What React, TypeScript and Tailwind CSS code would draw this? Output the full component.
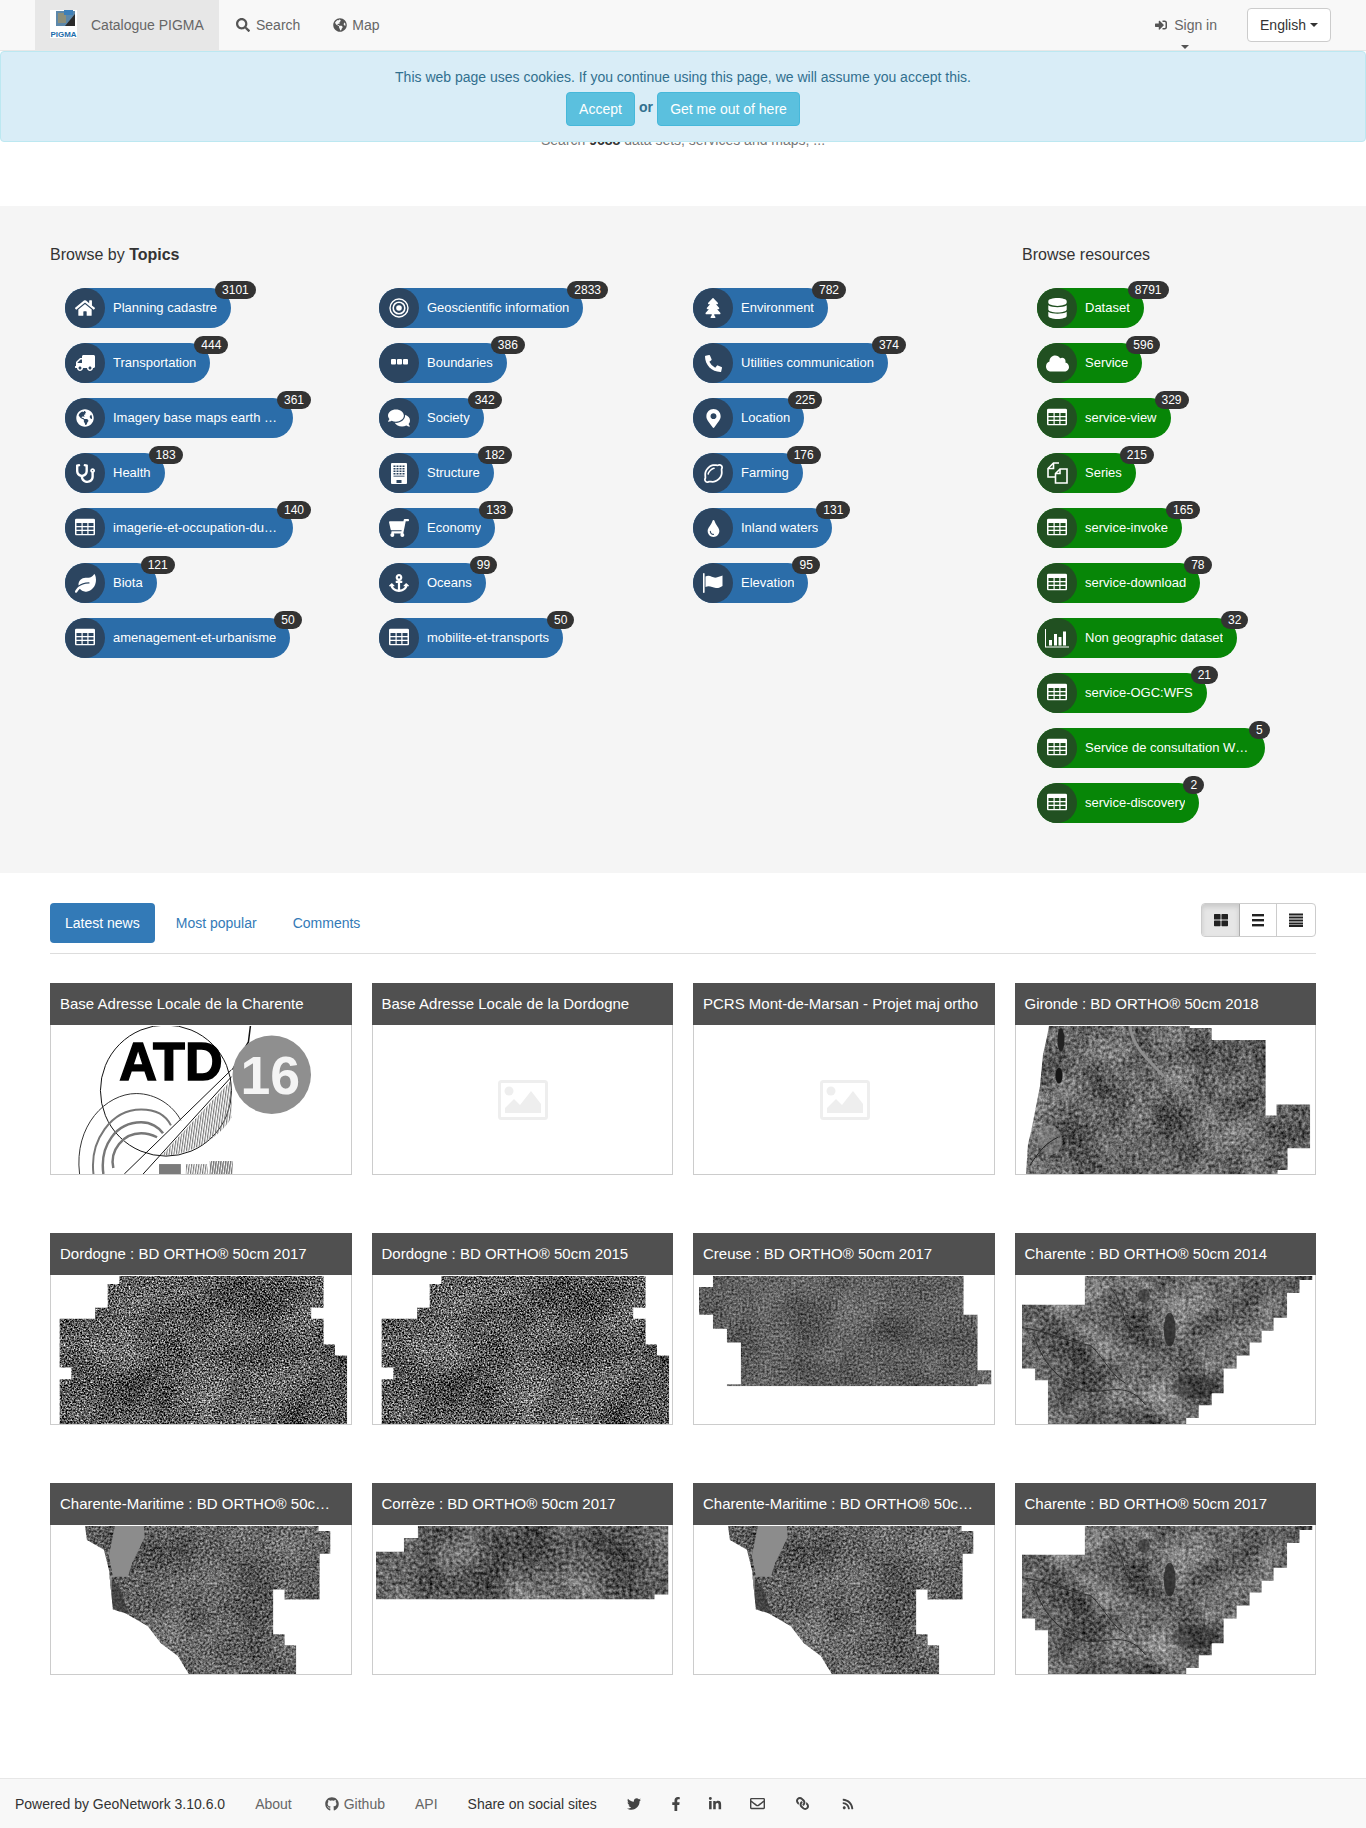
import React from "react";
import {
  FaHome, FaTruck, FaGlobeAmericas, FaStethoscope, FaLeaf, FaComments, FaShoppingCart, FaAnchor,
  FaTree, FaPhoneAlt, FaMapMarkerAlt, FaRegLemon, FaTint, FaDatabase, FaCloud, FaSearch, FaSignInAlt,
  FaTwitter, FaFacebookF, FaLinkedinIn, FaRegEnvelope, FaLink, FaRss, FaGithub, FaThLarge,
} from "react-icons/fa";

const TableIcon = () => (
  <svg width="20" height="17" viewBox="0 0 20 17" className="-translate-y-[1.5px] fill-white">
    <path fillRule="evenodd" d="M1.5 0h17A1.5 1.5 0 0 1 20 1.5v14a1.5 1.5 0 0 1-1.5 1.5h-17A1.5 1.5 0 0 1 0 15.5v-14A1.5 1.5 0 0 1 1.5 0ZM1.5 4.5v3h5v-3Zm6.2 0v3h4.6v-3Zm5.8 0v3h5v-3ZM1.5 8.7v2.6h5V8.7Zm6.2 0v2.6h4.6V8.7Zm5.8 0v2.6h5V8.7ZM1.5 12.5v3h5v-3Zm6.2 0v3h4.6v-3Zm5.8 0v3h5v-3Z" />
  </svg>
);
const RingsIcon = () => (
  <svg width="20" height="20" viewBox="0 0 20 20" fill="none" stroke="#fff">
    <circle cx="10" cy="10" r="9" strokeWidth="1.4" />
    <circle cx="10" cy="10" r="5.8" strokeWidth="1.6" />
    <circle cx="10" cy="10" r="2.8" fill="#fff" stroke="none" />
  </svg>
);
const DotsIcon = () => (
  <svg width="17" height="6" viewBox="0 0 17 6" className="-translate-y-[1px] fill-white">
    <rect x="0" y="0" width="5" height="5.5" rx="1" />
    <rect x="6" y="0" width="5" height="5.5" rx="1" />
    <rect x="12" y="0" width="5" height="5.5" rx="1" />
  </svg>
);
const BuildingIcon = () => (
  <svg width="16" height="21" viewBox="0 0 16 21">
    <rect width="16" height="21" rx="1" fill="#fff" />
    {[2.5, 5, 7.5, 10].map((y) =>
      [2.5, 5.5, 8.5, 11.5].map((x) => <rect key={`${x}-${y}`} x={x} y={y} width="2" height="1.5" fill="#2c4560" />),
    )}
    <rect x="2.5" y="12.5" width="11" height="1.5" fill="#2c4560" opacity=".6" />
    <rect x="5.5" y="17" width="5" height="3" fill="#2c4560" />
  </svg>
);
const FlagIcon = () => (
  <svg width="20" height="20" viewBox="0 0 20 20" className="fill-white">
    <rect x="0" y="0" width="1.6" height="20" rx=".8" />
    <path d="M2.5 3.5C7 1 9.5 5.5 13.5 4.5c2-.5 4.5-1.5 6-2v10.5c-2 1.3-4 2.2-6.5 2-4-.4-6.5-3-10.5-1Z" />
  </svg>
);
const BarsIcon = () => (
  <svg width="24" height="19" viewBox="0 0 24 19" className="fill-white">
    <rect x="0" y="0" width="1" height="18" />
    <rect x="0" y="17.5" width="24" height="1" />
    <rect x="4" y="11" width="3" height="5.5" />
    <rect x="9" y="5" width="3" height="11.5" />
    <rect x="13.5" y="8" width="3" height="8.5" />
    <rect x="18" y="2.5" width="3" height="14" />
  </svg>
);
const FilesIcon = () => (
  <svg width="21" height="22" viewBox="0 0 21 22" fill="none" stroke="#fff" strokeWidth="1.6">
    <path d="M12 1H6.5L1 6.5V15h7" />
    <path d="M6.5 1v5.5H1" />
    <path d="M20 7h-7l-4.5 4.5V21H20Z" />
    <path d="M13 7v4.5H8.5" />
  </svg>
);

type Item = { label: string; count: number; icon: React.ReactNode };
const topics: Item[] = [
  { label: "Planning cadastre", count: 3101, icon: <FaHome size={20} color="#fff" /> },
  { label: "Geoscientific information", count: 2833, icon: <RingsIcon /> },
  { label: "Environment", count: 782, icon: <FaTree size={20} color="#fff" /> },
  { label: "Transportation", count: 444, icon: <FaTruck size={20} color="#fff" className="-scale-x-100" /> },
  { label: "Boundaries", count: 386, icon: <DotsIcon /> },
  { label: "Utilities communication", count: 374, icon: <FaPhoneAlt size={17} color="#fff" /> },
  { label: "Imagery base maps earth cover", count: 361, icon: <FaGlobeAmericas size={18} color="#fff" /> },
  { label: "Society", count: 342, icon: <FaComments size={22} color="#fff" /> },
  { label: "Location", count: 225, icon: <FaMapMarkerAlt size={19} color="#fff" /> },
  { label: "Health", count: 183, icon: <FaStethoscope size={19} color="#fff" /> },
  { label: "Structure", count: 182, icon: <BuildingIcon /> },
  { label: "Farming", count: 176, icon: <FaRegLemon size={19} color="#fff" /> },
  { label: "imagerie-et-occupation-du-sol", count: 140, icon: <TableIcon /> },
  { label: "Economy", count: 133, icon: <FaShoppingCart size={20} color="#fff" className="-scale-x-100" /> },
  { label: "Inland waters", count: 131, icon: <FaTint size={17} color="#fff" /> },
  { label: "Biota", count: 121, icon: <FaLeaf size={21} color="#fff" /> },
  { label: "Oceans", count: 99, icon: <FaAnchor size={20} color="#fff" /> },
  { label: "Elevation", count: 95, icon: <FlagIcon /> },
  { label: "amenagement-et-urbanisme", count: 50, icon: <TableIcon /> },
  { label: "mobilite-et-transports", count: 50, icon: <TableIcon /> },
];
const resources: Item[] = [
  { label: "Dataset", count: 8791, icon: <FaDatabase size={21} color="#fff" /> },
  { label: "Service", count: 596, icon: <FaCloud size={23} color="#fff" /> },
  { label: "service-view", count: 329, icon: <TableIcon /> },
  { label: "Series", count: 215, icon: <FilesIcon /> },
  { label: "service-invoke", count: 165, icon: <TableIcon /> },
  { label: "service-download", count: 78, icon: <TableIcon /> },
  { label: "Non geographic dataset", count: 32, icon: <BarsIcon /> },
  { label: "service-OGC:WFS", count: 21, icon: <TableIcon /> },
  { label: "Service de consultation WMS", count: 5, icon: <TableIcon /> },
  { label: "service-discovery", count: 2, icon: <TableIcon /> },
];

function Pill({ item, green }: { item: Item; green?: boolean }) {
  return (
    <div className={`relative inline-flex h-10 w-fit max-w-[228px] items-center rounded-[20px] pl-[48px] pr-[14px] text-[13px] text-white ${green ? "bg-[#078607]" : "bg-[#2b6da9]"}`}>
      <span className={`absolute left-0 top-0 flex h-10 w-10 items-center justify-center rounded-full ${green ? "bg-[#215021]" : "bg-[#2c4560]"}`}>{item.icon}</span>
      <span className="truncate">{item.label}</span>
      <span className="absolute left-[calc(100%-16px)] top-[-7px] h-[18px] rounded-[10px] bg-[#333] px-[7px] text-[12px] leading-[18px] text-white">{item.count}</span>
    </div>
  );
}

function Noise({ id, freq, k, mean, seed, low = 0.3 }: { id: string; freq: number; k: number; mean: number; seed: number; low?: number }) {
  const b = mean - k / 2;
  const m = `${k} 0 0 0 ${b} ${k} 0 0 0 ${b} ${k} 0 0 0 ${b} 0 0 0 0 1`;
  return (
    <filter id={id} x="0" y="0" width="100%" height="100%" colorInterpolationFilters="sRGB">
      <feTurbulence type="fractalNoise" baseFrequency={freq} numOctaves={3} seed={seed} result="n" />
      <feColorMatrix in="n" type="matrix" values={m} result="g" />
      <feTurbulence type="fractalNoise" baseFrequency={0.022} numOctaves={2} seed={seed + 3} result="l" />
      <feColorMatrix in="l" type="matrix" values="1 0 0 0 0 1 0 0 0 0 1 0 0 0 0 0 0 0 0 1" result="lg" />
      <feComposite in="g" in2="lg" operator="arithmetic" k1="0" k2="1" k3={low} k4={-low / 2} />
    </filter>
  );
}

function MapThumb({ id, points, freq, k, mean, seed, low, children }: { id: string; points: string; freq: number; k: number; mean: number; seed: number; low?: number; children?: React.ReactNode }) {
  return (
    <svg viewBox="0 0 300 149" className="block h-full w-full" preserveAspectRatio="none">
      <defs>
        <Noise id={`f-${id}`} freq={freq} k={k} mean={mean} seed={seed} low={low} />
        <clipPath id={`c-${id}`}>
          <polygon points={points} />
        </clipPath>
      </defs>
      <g clipPath={`url(#c-${id})`}>
        <rect width="300" height="149" filter={`url(#f-${id})`} />
        {children}
      </g>
    </svg>
  );
}

const Placeholder = () => (
  <div className="flex h-full items-center justify-center pl-[2px]">
    <svg width="50" height="40" viewBox="0 0 50 40">
      <rect x="1.5" y="1.5" width="47" height="37" rx="2" fill="none" stroke="#eeeeee" strokeWidth="3" />
      <circle cx="11" cy="11" r="4.5" fill="#eeeeee" />
      <path d="M7 33V28L16 19 22 25 33 11 43 24V33Z" fill="#eeeeee" />
    </svg>
  </div>
);

const AtdLogo = () => (
  <svg viewBox="0 0 300 149" className="block h-full w-full">
    <defs>
      <pattern id="hatch" width="2.4" height="4" patternUnits="userSpaceOnUse" patternTransform="rotate(8)">
        <rect width="1.1" height="4" fill="#777" />
      </pattern>
      <clipPath id="atd-clip"><rect width="300" height="149" /></clipPath>
    </defs>
    <g clipPath="url(#atd-clip)" fill="none">
      <circle cx="115" cy="65" r="66" stroke="#111" strokeWidth="1" />
      <path d="M181 54L181 92C170 112 140 130 110 131Z" fill="url(#hatch)" />
      <path d="M181 44L73 149M181 51L92 149" stroke="#111" strokeWidth="1" />
      <path d="M28 149C22 100 55 68 85 68C105 68 122 80 130 95" stroke="#333" strokeWidth="1" />
      <path d="M42 149C38 115 60 84 90 84C105 84 115 90 120 100" stroke="#777" strokeWidth="2" />
      <path d="M52 149C48 120 65 97 90 97C100 97 108 102 112 108" stroke="#777" strokeWidth="2.5" />
      <path d="M62 143C58 125 72 108 90 108C96 108 102 110 106 112" stroke="#777" strokeWidth="2.5" />
      <rect x="108" y="139" width="22" height="10" fill="#7b7b7b" />
      <rect x="135" y="139" width="22" height="10" fill="url(#hatch)" />
      <rect x="159" y="136" width="23" height="13" fill="url(#hatch)" />
      <rect x="159" y="136" width="23" height="13" fill="url(#hatch)" />
      <path d="M200 0L198 16L182 44" stroke="#111" strokeWidth="1.5" />
      <circle cx="221.5" cy="49" r="39.5" fill="#8f8f8f" />
      <text x="120" y="54" textAnchor="middle" fontFamily="Liberation Sans" fontWeight="700" fontSize="54" fill="#000" stroke="#000" strokeWidth="1.5" textLength="104" lengthAdjust="spacingAndGlyphs">ATD</text>
      <text x="220" y="68" textAnchor="middle" fontFamily="Liberation Sans" fontWeight="700" fontSize="54" fill="#f4f4f4">16</text>
    </g>
  </svg>
);

const dordogne = "68.5,0 273,0 273,32 260.6,32 260.6,43 273,43 273,69 284.5,69 284.5,80 296.6,80 296.6,149 8.7,149 8.7,104 20.4,104 20.4,92 8.7,92 8.7,43 44.2,43 44.2,32 56.8,32 56.8,8 68.5,8";
const creuse = "19,0 270,0 270,39 284,39 284,95 298,95 298,109 284,109 284,111 33,111 33,109 47,109 47,67 33,67 33,53 19,53 19,39 5,39 5,11 19,11";
const charente = "69,0 297,0 297,4 284,4 284,17 271.5,17 271.5,42 258,42 258,55 246,55 246,67 234,67 234,80 221,80 221,93 208,93 208,118 196,118 196,130 183,130 183,143 170.5,143 170.5,149 32,149 32,105 19,105 19,93 6,93 6,29 69,29";
const gironde = "33,0 174,0 174,2 196,2 196,14 250,14 250,90 261,90 261,79 294.6,79 294.6,123 272,123 272,145 262,145 262,149 10,149 12,119 15.6,104 20,81 24,61 27,29 31,11";
const maritime = "34,0 268,0 268,5 280,5 280,28 269,28 269,74 234,74 234,64 222.5,64 222.5,109 234,109 234,120 245.5,120 245.5,149 138,149 127,131 110,118 97,101 75,88 62,84 58,44 53,24 36,14";
const correze = "45,0 296,0 296,69 282,69 282,74 3,74 3,26 31,26 31,12 45,12";

const CharenteExtras = () => (
  <>
    <ellipse cx="154" cy="54" rx="6" ry="17" fill="#262626" opacity=".8" />
    <ellipse cx="178" cy="112" rx="22" ry="12" fill="#262626" opacity=".3" />
    <ellipse cx="128" cy="20" rx="6" ry="7" fill="#262626" opacity=".6" />
    <path d="M18 60C26 85 40 105 70 116C95 118 110 105 130 130" fill="none" stroke="#2e2e2e" strokeWidth="1" />
    <path d="M6 52C30 55 50 66 75 70C90 85 95 100 110 108" fill="none" stroke="#2e2e2e" strokeWidth="1" />
    <path d="M95 12C110 30 105 45 118 62" fill="none" stroke="#333" strokeWidth="1" />
  </>
);
const MaritimeExtras = () => (
  <>
    <path d="M64 0H93L94 11L81 38L77 51H62L58 30Z" fill="#8c8c8c" />
    <path d="M58 51L62 84L78 88L68 60Z" fill="#333" opacity=".65" />
    <path d="M60 51V82L64 85" fill="none" stroke="#aaa" strokeWidth="1.2" />
  </>
);
const GirondeExtras = () => (
  <>
    <path d="M114 0C118 25 135 35 148 51" fill="none" stroke="#8f8f8f" strokeWidth="3" />
    <path d="M148 51L172 65" fill="none" stroke="#8f8f8f" strokeWidth="1" />
    <ellipse cx="43" cy="50" rx="3.5" ry="8" fill="#161616" />
    <ellipse cx="45" cy="14" rx="3.5" ry="12" fill="#222" />
    <ellipse cx="34" cy="115" rx="12" ry="15" fill="#999" opacity=".45" />
    <path d="M14 140C24 125 30 118 42 112" fill="none" stroke="#222" strokeWidth="1" />
  </>
);

const cards: { title: string; body: React.ReactNode }[] = [
  { title: "Base Adresse Locale de la Charente", body: <AtdLogo /> },
  { title: "Base Adresse Locale de la Dordogne", body: <Placeholder /> },
  { title: "PCRS Mont-de-Marsan - Projet maj ortho", body: <Placeholder /> },
  { title: "Gironde : BD ORTHO® 50cm 2018", body: <MapThumb id="gir" points={gironde} freq={0.3} k={0.75} mean={0.39} seed={4} low={0.5}><GirondeExtras /></MapThumb> },
  { title: "Dordogne : BD ORTHO® 50cm 2017", body: <MapThumb id="dor1" points={dordogne} freq={0.6} k={1.7} mean={0.36} seed={7} low={0.35} /> },
  { title: "Dordogne : BD ORTHO® 50cm 2015", body: <MapThumb id="dor2" points={dordogne} freq={0.6} k={1.7} mean={0.36} seed={7} low={0.35} /> },
  { title: "Creuse : BD ORTHO® 50cm 2017", body: <MapThumb id="cre" points={creuse} freq={0.45} k={0.65} mean={0.37} seed={11} low={0.25} /> },
  { title: "Charente : BD ORTHO® 50cm 2014", body: <MapThumb id="cha1" points={charente} freq={0.3} k={0.7} mean={0.39} seed={15} low={0.55}><CharenteExtras /></MapThumb> },
  { title: "Charente-Maritime : BD ORTHO® 50cm 2017", body: <MapThumb id="mar1" points={maritime} freq={0.42} k={0.9} mean={0.38} seed={20} low={0.3}><MaritimeExtras /></MapThumb> },
  { title: "Corrèze : BD ORTHO® 50cm 2017", body: <MapThumb id="cor" points={correze} freq={0.3} k={0.75} mean={0.36} seed={23} low={0.4} /> },
  { title: "Charente-Maritime : BD ORTHO® 50cm 2014", body: <MapThumb id="mar2" points={maritime} freq={0.42} k={0.9} mean={0.38} seed={20} low={0.3}><MaritimeExtras /></MapThumb> },
  { title: "Charente : BD ORTHO® 50cm 2017", body: <MapThumb id="cha2" points={charente} freq={0.3} k={0.7} mean={0.39} seed={15} low={0.55}><CharenteExtras /></MapThumb> },
];

const Caret = ({ className = "" }: { className?: string }) => (
  <span className={`inline-block h-0 w-0 border-x-4 border-t-4 border-x-transparent border-t-current ${className}`} />
);

const Logo = () => (
  <svg width="27" height="28" viewBox="0 0 27 28">
    <rect width="27" height="28" fill="#fff" />
    <rect x="6" y="1" width="19" height="15" fill="#5d88aa" />
    <rect x="8" y="3" width="8" height="10" fill="#8d8f7a" />
    <path d="M15 16L25 4V16Z" fill="#2b2b2b" />
    <rect x="14" y="0" width="9" height="5" fill="#3d7fb8" />
    <text x="0.5" y="27" fontFamily="Liberation Sans" fontWeight="700" fontSize="7.6" fill="#1c6cab" textLength="26" lengthAdjust="spacingAndGlyphs">PIGMA</text>
  </svg>
);

const Bars = ({ n }: { n: number }) => (
  <svg width="14" height="14" viewBox="0 0 14 14" fill="#222">
    {n === 3
      ? [1, 6, 11].map((y) => <rect key={y} x="1" y={y} width="12" height="2.4" />)
      : [0.5, 3.5, 6.5, 9.5, 12].map((y) => <rect key={y} x="0" y={y} width="14" height="2" />)}
  </svg>
);

export default function App() {
  return (
    <div className="relative h-[1828px] overflow-hidden bg-white font-['Liberation_Sans',sans-serif] text-[14px] leading-5 text-[#333]">
      <header className="flex h-[51px] items-stretch border-b border-[#e7e7e7] bg-[#f8f8f8] pl-[35px] pr-[35px] text-[#666]">
        <div className="flex w-[184px] items-center bg-[#e7e7e7] pl-[15px]">
          <span className="mt-[-2px]"><Logo /></span>
          <span className="ml-[14px]">Catalogue PIGMA</span>
        </div>
        <div className="ml-[17px] flex items-center gap-[6px]"><FaSearch size={14} color="#555" />Search</div>
        <div className="ml-[33px] flex items-center gap-[5px]"><FaGlobeAmericas size={14} color="#555" />Map</div>
        <div className="relative ml-auto mr-[30px] flex items-center gap-[7px] text-[#666]">
          <FaSignInAlt size={12} color="#555" />
          Sign in
          <Caret className="absolute bottom-[1px] left-[26px] text-[#555]" />
        </div>
        <div className="my-[8px] flex h-[34px] w-[84px] items-center justify-center gap-1 rounded border border-[#ccc] bg-white text-[#333]">
          English <Caret />
        </div>
      </header>

      <div className="absolute left-0 right-0 top-[51px] z-10 rounded border border-[#bce8f1] bg-[#d9edf7] p-[15px] text-center text-[#31708f]">
        <div>This web page uses cookies. If you continue using this page, we will assume you accept this.</div>
        <div className="mt-[5px] flex items-center justify-center">
          <span className="flex h-[34px] w-[69px] items-center justify-center rounded border border-[#46b8da] bg-[#5bc0de] text-white">Accept</span>
          <b className="mx-1 mt-[-4px]">or</b>
          <span className="flex h-[34px] w-[143px] items-center justify-center rounded border border-[#46b8da] bg-[#5bc0de] text-white">Get me out of here</span>
        </div>
      </div>

      <div className="h-[155px] pt-[79px] text-center text-[#777]">
        Search <b className="text-[#333]">9688</b> data sets, services and maps, ...
      </div>

      <section className="flex bg-[#f5f5f5] pb-[50px] pl-[50px] pt-[38px]">
        <div className="w-[972px]">
          <h2 className="mb-[22px] h-[22px] text-[16px] leading-[22px]">Browse by <b>Topics</b></h2>
          <div className="grid grid-cols-[repeat(3,314px)] gap-y-[15px] pl-[15px]">
            {topics.map((t) => (
              <div key={t.label} className="h-10"><Pill item={t} /></div>
            ))}
          </div>
        </div>
        <div>
          <h2 className="mb-[22px] h-[22px] text-[16px] leading-[22px]">Browse resources</h2>
          <div className="flex flex-col gap-[15px] pl-[15px]">
            {resources.map((r) => (
              <div key={r.label} className="h-10"><Pill item={r} green /></div>
            ))}
          </div>
        </div>
      </section>

      <main className="px-[50px] pt-[30px]">
        <div className="flex items-start justify-between border-b border-[#ddd] pb-[10px]">
          <div className="flex items-center text-[#337ab7]">
            <span className="flex h-10 items-center rounded bg-[#337ab7] px-[15px] text-white">Latest news</span>
            <span className="ml-[6px] px-[15px]">Most popular</span>
            <span className="ml-[6px] px-[15px]">Comments</span>
          </div>
          <div className="flex h-[34px] w-[115px] overflow-hidden rounded border border-[#ccc]">
            <span className="flex w-[38px] items-center justify-center border-r border-[#adadad] bg-[#e6e6e6] shadow-[inset_0_3px_5px_rgba(0,0,0,0.125)]"><FaThLarge size={14} color="#222" /></span>
            <span className="flex w-[37px] items-center justify-center border-r border-[#ccc]"><Bars n={3} /></span>
            <span className="flex flex-1 items-center justify-center"><Bars n={5} /></span>
          </div>
        </div>

        <div className="mt-[29px] grid grid-cols-4 gap-x-[20px] gap-y-[58px]">
          {cards.map((c) => (
            <div key={c.title} className="h-[192px]">
              <div className="h-[42px] truncate bg-[#505050] pl-[10px] pr-[15px] text-[15px] leading-[42px] text-white">{c.title}</div>
              <div className="h-[150px] overflow-hidden border border-t-0 border-[#ccc] bg-white pt-[1px]">{c.body}</div>
            </div>
          ))}
        </div>
      </main>

      <footer className="absolute bottom-0 left-0 right-0 flex h-[50px] items-center border-t border-[#e7e7e7] bg-[#f8f8f8] pl-[15px] text-[#555]">
        <span className="text-[#333]">Powered by GeoNetwork 3.10.6.0</span>
        <span className="ml-[30px] text-[#666]">About</span>
        <span className="ml-[33px] flex items-center gap-[5px] text-[#666]"><FaGithub size={14} color="#555" />Github</span>
        <span className="ml-[30px] text-[#666]">API</span>
        <span className="ml-[30px] text-[#333]">Share on social sites</span>
        <span className="ml-[30px] flex items-center">
          <span className="w-[42px]"><FaTwitter size={14} color="#444" /></span>
          <span className="w-[39px]"><FaFacebookF size={14} color="#444" /></span>
          <span className="w-[42px]"><FaLinkedinIn size={14} color="#444" /></span>
          <span className="w-[46px]"><FaRegEnvelope size={15} color="#444" /></span>
          <span className="w-[46px]"><FaLink size={13} color="#444" className="-scale-x-100" /></span>
          <span><FaRss size={12} color="#444" /></span>
        </span>
      </footer>
    </div>
  );
}
